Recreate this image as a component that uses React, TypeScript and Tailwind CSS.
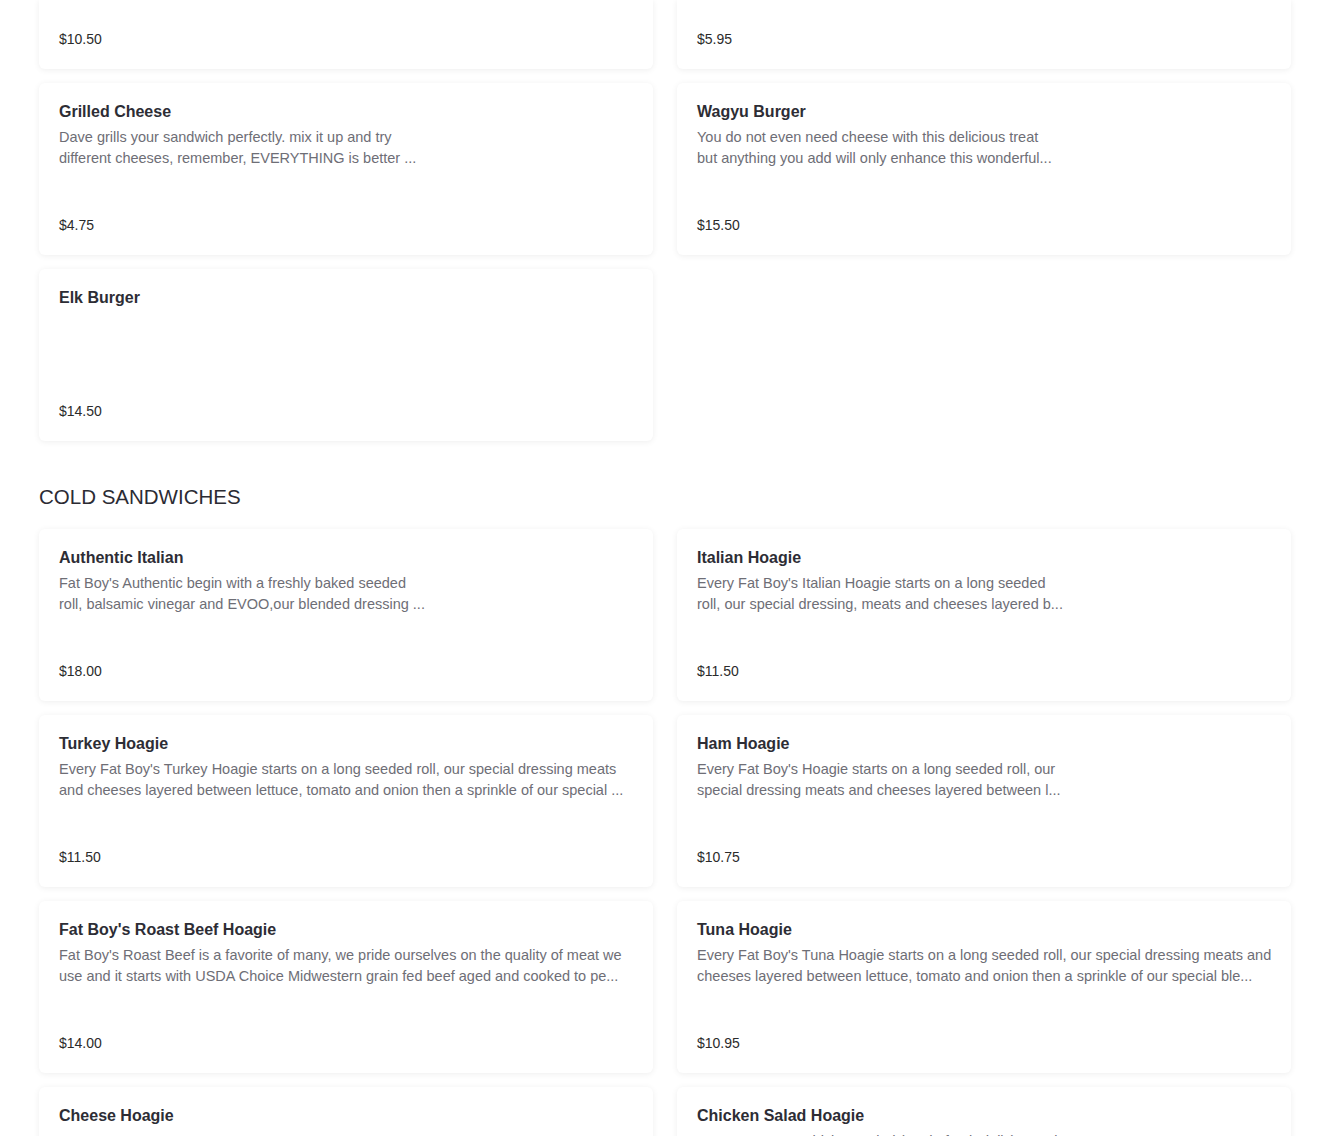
import React from "react";

type Item = { title?: string; lines?: string[]; price?: string; narrow?: boolean };

const font = { fontFamily: "'Liberation Sans', Arial, sans-serif" };

function Card({ item, partial }: { item: Item; partial?: boolean }) {
  return (
    <div
      className={
        "bg-white flex flex-col px-5 pb-5 shadow-[0_1px_6px_rgba(0,0,0,0.07)] " +
        (partial ? "h-[69px] rounded-b-md justify-end" : "h-[172px] rounded-md pt-[17px] overflow-hidden")
      }
    >
      {item.title && (
        <div className="text-[16px] leading-6 font-bold text-[#2d2d35] whitespace-nowrap">{item.title}</div>
      )}
      {item.lines && (
        <div className={"mt-[3px] text-[14.5px] leading-[21px] text-[#6e6e76] " + (item.narrow ? "w-[380px]" : "")}>
          {item.lines.map((l, i) => (
            <div key={i} className="whitespace-nowrap overflow-hidden">
              {l}
            </div>
          ))}
        </div>
      )}
      {item.price && <div className="mt-auto text-[14px] leading-5 text-[#2b2b2b]">{item.price}</div>}
    </div>
  );
}

const hot: Item[] = [
  {
    title: "Grilled Cheese",
    lines: ["Dave grills your sandwich perfectly. mix it up and try", "different cheeses, remember, EVERYTHING is better ..."],
    price: "$4.75",
    narrow: true,
  },
  {
    title: "Wagyu Burger",
    lines: ["You do not even need cheese with this delicious treat", "but anything you add will only enhance this wonderful..."],
    price: "$15.50",
    narrow: true,
  },
  { title: "Elk Burger", price: "$14.50" },
];

const cold: Item[] = [
  {
    title: "Authentic Italian",
    lines: ["Fat Boy's Authentic begin with a freshly baked seeded", "roll, balsamic vinegar and EVOO,our blended dressing ..."],
    price: "$18.00",
    narrow: true,
  },
  {
    title: "Italian Hoagie",
    lines: ["Every Fat Boy's Italian Hoagie starts on a long seeded", "roll, our special dressing, meats and cheeses layered b..."],
    price: "$11.50",
    narrow: true,
  },
  {
    title: "Turkey Hoagie",
    lines: [
      "Every Fat Boy's Turkey Hoagie starts on a long seeded roll, our special dressing meats",
      "and cheeses layered between lettuce, tomato and onion then a sprinkle of our special ...",
    ],
    price: "$11.50",
  },
  {
    title: "Ham Hoagie",
    lines: ["Every Fat Boy's Hoagie starts on a long seeded roll, our", "special dressing meats and cheeses layered between l..."],
    price: "$10.75",
    narrow: true,
  },
  {
    title: "Fat Boy's Roast Beef Hoagie",
    lines: [
      "Fat Boy's Roast Beef is a favorite of many, we pride ourselves on the quality of meat we",
      "use and it starts with USDA Choice Midwestern grain fed beef aged and cooked to pe...",
    ],
    price: "$14.00",
  },
  {
    title: "Tuna Hoagie",
    lines: [
      "Every Fat Boy's Tuna Hoagie starts on a long seeded roll, our special dressing meats and",
      "cheeses layered between lettuce, tomato and onion then a sprinkle of our special ble...",
    ],
    price: "$10.95",
  },
  { title: "Cheese Hoagie", price: "$9.50" },
  {
    title: "Chicken Salad Hoagie",
    lines: ["Every Fat Boy's Chicken Salad (made fresh daily) Hoagie starts on a", "long seeded roll with lettuce, tomato and onion..."],
    price: "$10.95",
  },
];

export default function App() {
  return (
    <div className="bg-white min-h-screen px-[39px]" style={font}>
      <div className="grid grid-cols-2 gap-x-6 gap-y-[14px]">
        <Card partial item={{ price: "$10.50" }} />
        <Card partial item={{ price: "$5.95" }} />
        {hot.map((it, i) => (
          <Card key={i} item={it} />
        ))}
      </div>
      <h2 className="mt-[42px] mb-[18px] text-[20.5px] leading-7 font-medium text-[#2b2b33]">
        COLD SANDWICHES
      </h2>
      <div className="grid grid-cols-2 gap-x-6 gap-y-[14px] pb-10">
        {cold.map((it, i) => (
          <Card key={i} item={it} />
        ))}
      </div>
    </div>
  );
}
